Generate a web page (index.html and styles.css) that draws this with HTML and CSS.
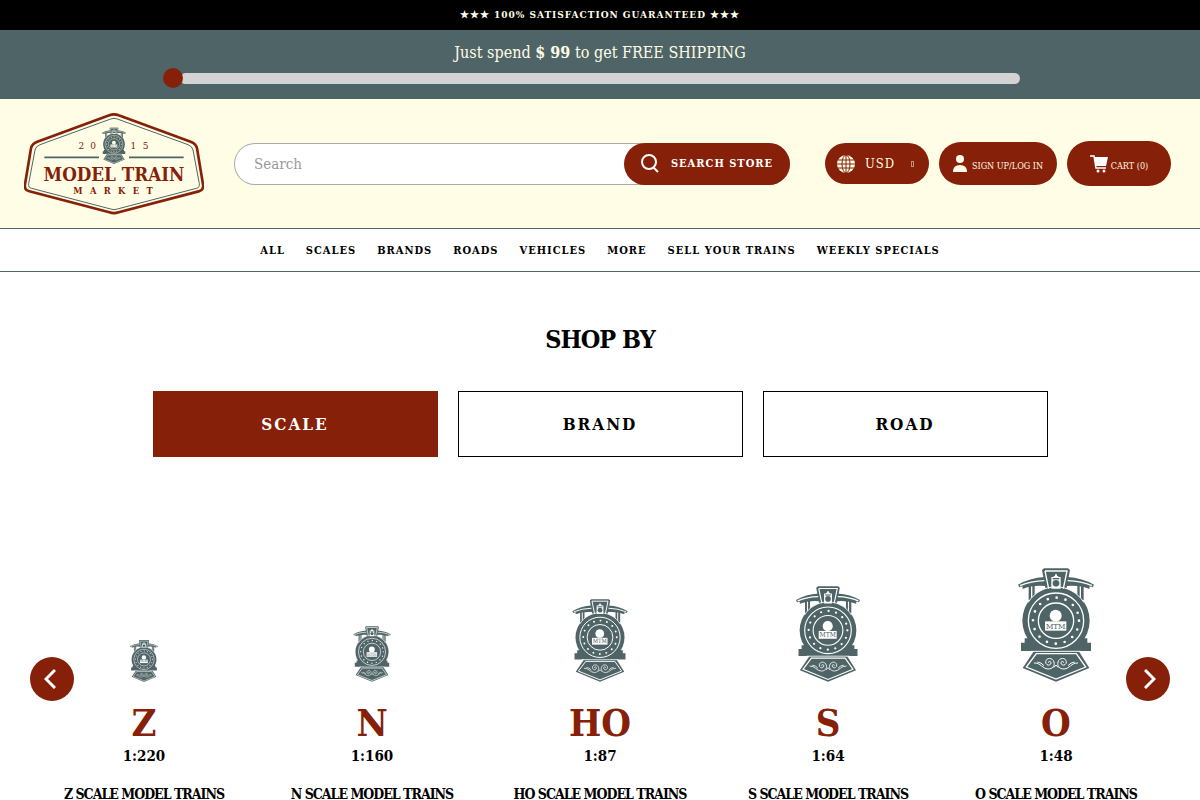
FILE: index.html
```html
<!DOCTYPE html>
<html lang="en">
<head>
    <meta charset="UTF-8">
    <meta name="viewport" content="width=device-width, initial-scale=1.0">
    <title>Model Train Market</title>
    <link rel="stylesheet" href="styles.css">
</head>
<body>

    <!-- shared shapes -->
    <svg class="defs" width="0" height="0" aria-hidden="true">
        <symbol id="train" viewBox="114 54 228 342">
            <g fill="currentColor">
                <path d="M146 98h7v52h-7zM157 98h7v44h-7zM292 98h7v44h-7zM303 98h8v52h-8z"/>
                <path d="M114 104Q148 84 194 81L198 108Q158 104 128 117L127 109L118 112ZM342 104Q308 84 262 81L258 108Q298 104 328 117L329 109L338 112Z"/>
                <path d="M186 60L192 55H264L270 60L258 124H198Z"/>
                <path d="M123 278H134V265H322V278H333V303H123Z"/>
                <circle cx="228" cy="212" r="101"/>
                <path d="M162 303H296L328 354L228 395L128 354Z"/>
            </g>
            <g fill="none" stroke="var(--line)" stroke-width="4">
                <path d="M120 107Q152 93 193 92M336 107Q304 93 263 92"/>
                <path d="M195 63H261L250 116M195 63L206 116"/>
                <path d="M144 158A98 98 0 0 1 312 158" stroke-width="3"/>
                <circle cx="228" cy="212" r="83"/>
                <circle cx="228" cy="212" r="53"/>
                <circle class="rivets" cx="228" cy="212" r="69" stroke-width="8" stroke-linecap="round" stroke-dasharray="0 27.096"/>
                <path d="M152 304H304" stroke-width="3"/>
                <path d="M169 311H289L317 351L228 387L139 351Z"/>
                <path d="M162 339C182 338 187 356 204 357C218 357 225 347 222 336C218 322 199 322 197 335C196 347 212 349 213 339C213 332 205 333 205 338M294 339C274 338 269 356 252 357C238 357 231 347 234 336C238 322 257 322 259 335C260 347 244 349 243 339C243 332 251 333 251 338" stroke-width="3"/>
                <path d="M172 336Q184 337 192 347M284 336Q272 337 264 347M221 353L228 345L235 353" stroke-width="3"/>
            </g>
            <g fill="var(--line)">
                <path d="M214 81H221V78H225V73H231V78H235V81H242V116H214Z"/>
                <circle cx="227" cy="197" r="18"/>
                <path d="M195 214H259V242H195Z"/>
            </g>
            <g fill="currentColor">
                <path d="M218 84H238V88H218Z"/>
                <circle cx="228" cy="100" r="10"/>
                <text class="plate" x="227" y="236" text-anchor="middle">MTM</text>
            </g>
        </symbol>
    </svg>

    <div class="topbar">★★★ 100% SATISFACTION GUARANTEED ★★★</div>

    <div class="shipping">
        <p>Just spend <b>$ 99</b> to get FREE SHIPPING</p>
        <div class="track" role="progressbar" aria-label="Free shipping" aria-valuenow="0" aria-valuemin="0" aria-valuemax="99">
            <span class="knob"></span>
        </div>
    </div>

    <header class="header">
        <a class="logo" href="#" aria-label="Model Train Market">
            <svg width="180" height="102" viewBox="72 38 540 306">
                <path d="M328 45Q342 39 356 45L572 124Q588 130 591 144L609 252Q612 269 596 273L356 336Q342 341 328 336L88 273Q72 269 75 252L93 144Q96 130 112 124Z" fill="none" stroke="#862008" stroke-width="8"/>
                <path d="M332 56Q342 52 352 56L564 133Q577 138 579 149L598 250Q600 262 589 264L352 326Q342 330 332 326L95 264Q84 262 86 250L105 149Q107 138 120 133Z" fill="none" stroke="#4f6466" stroke-width="3"/>
                <path d="M133 171H297M387 171H551" stroke="#4f6466" stroke-width="5"/>
                <use href="#train" x="305" y="81" width="74" height="110"/>
                <g fill="#862008" text-anchor="middle">
                    <text class="year" x="244" y="145">2</text>
                    <text class="year" x="279" y="145">0</text>
                    <text class="year" x="400" y="145">1</text>
                    <text class="year" x="437" y="145">5</text>
                    <text class="name" x="342" y="241">MODEL TRAIN</text>
                    <text class="market" x="350" y="280">MARKET</text>
                </g>
            </svg>
        </a>

        <form class="search">
            <input type="text" placeholder="Search" aria-label="Search">
            <button type="button">
                <svg width="18" height="20" viewBox="0 0 18 20" fill="none" stroke="#fff" stroke-width="2"><circle cx="8" cy="8" r="7"/><path d="M12 13L17 18"/></svg>
                SEARCH STORE
            </button>
        </form>

        <div class="actions">
            <label class="pill currency">
                <svg width="18" height="18" viewBox="0 0 18 18"><circle cx="9" cy="9" r="9" fill="#fffde6"/><g fill="none" stroke="#862008"><ellipse cx="9" cy="9" rx="4" ry="9"/><path d="M9 0V18M0 9H18M1 5H17M1 13H17"/></g></svg>
                <select aria-label="Currency">
                    <option>USD</option>
                </select>
                <span class="caret"></span>
            </label>
            <a class="pill account" href="#">
                <svg width="14" height="17" viewBox="0 0 14 17" fill="#fffde6"><circle cx="7" cy="4" r="4"/><path d="M0 17Q0 10 7 10T14 17Z"/></svg>
                <span>SIGN UP/LOG IN</span>
            </a>
            <a class="pill cart" href="#">
                <svg width="18" height="18" viewBox="0 0 18 18"><path d="M0 1H4L6 13H16" fill="none" stroke="#fff" stroke-width="1.5"/><path d="M4 2H18L16 11H6Z" fill="#fff"/><circle cx="8" cy="16" r="1.5" fill="#fff"/><circle cx="14" cy="16" r="1.5" fill="#fff"/></svg>
                <span>CART (0)</span>
            </a>
        </div>
    </header>

    <nav class="nav">
        <a href="#">ALL</a>
        <a href="#">SCALES</a>
        <a href="#">BRANDS</a>
        <a href="#">ROADS</a>
        <a href="#">VEHICLES</a>
        <a href="#">MORE</a>
        <a href="#">SELL YOUR TRAINS</a>
        <a href="#">WEEKLY SPECIALS</a>
    </nav>

    <main>
        <h1>SHOP BY</h1>

        <div class="tabs">
            <button type="button" class="active">SCALE</button>
            <button type="button">BRAND</button>
            <button type="button">ROAD</button>
        </div>

        <div class="carousel">
            <button type="button" class="arrow prev" aria-label="Previous">
                <svg width="12" height="20" viewBox="0 0 12 20" fill="none" stroke="#fff" stroke-width="3"><path d="M11 1L2 10L11 19"/></svg>
            </button>
            <div class="items">
                <a class="item" href="#">
                    <svg class="train" width="28" height="42"><use href="#train"/></svg>
                    <strong>Z</strong>
                    <b>1:220</b>
                    <span>Z SCALE MODEL TRAINS</span>
                </a>
                <a class="item" href="#">
                    <svg class="train" width="38" height="56"><use href="#train"/></svg>
                    <strong>N</strong>
                    <b>1:160</b>
                    <span>N SCALE MODEL TRAINS</span>
                </a>
                <a class="item" href="#">
                    <svg class="train" width="56" height="83"><use href="#train"/></svg>
                    <strong>HO</strong>
                    <b>1:87</b>
                    <span>HO SCALE MODEL TRAINS</span>
                </a>
                <a class="item" href="#">
                    <svg class="train" width="64" height="96"><use href="#train"/></svg>
                    <strong>S</strong>
                    <b>1:64</b>
                    <span>S SCALE MODEL TRAINS</span>
                </a>
                <a class="item" href="#">
                    <svg class="train" width="76" height="114"><use href="#train"/></svg>
                    <strong>O</strong>
                    <b>1:48</b>
                    <span>O SCALE MODEL TRAINS</span>
                </a>
            </div>
            <button type="button" class="arrow next" aria-label="Next">
                <svg width="12" height="20" viewBox="0 0 12 20" fill="none" stroke="#fff" stroke-width="3"><path d="M1 1L10 10L1 19"/></svg>
            </button>
        </div>
    </main>

</body>
</html>
```
FILE: styles.css
```css
*{
    box-sizing: border-box;
}

body{
    margin: 0;
    background: #fff;
    color: #000;
    font-family: "Roboto Slab", "DejaVu Serif Condensed", "DejaVu Serif", serif;
    --line: #fff;
}

button,input,select{
    font-family: inherit;
    margin: 0;
}

a{
    color: inherit;
    text-decoration: none;
}

.defs{
    display: none;
}

/* top bars */
.topbar{
    height: 30px;
    line-height: 30px;
    background: #000;
    color: #fffde6;
    text-align: center;
    font-size: 10px;
    font-weight: bold;
    letter-spacing: 1px;
}

.shipping{
    padding: 11px 0 15px;
    background: #4f6466;
    color: #fffde6;
}

.shipping p{
    margin: 0 0 8px;
    text-align: center;
    font-size: 16px;
    line-height: 24px;
}

.track{
    position: relative;
    width: 70%;
    height: 11px;
    margin: 0 auto;
    border-radius: 6px;
    background: #d3d3d3;
}

.knob{
    position: absolute;
    left: -17px;
    top: -5px;
    width: 20px;
    height: 20px;
    border-radius: 50%;
    background: #862008;
}

/* header */
.header{
    display: flex;
    align-items: center;
    height: 129px;
    padding: 0 29px 0 24px;
    background: #fffde6;
    --line: #fffde6;
}

.logo{
    display: flex;
    margin-right: 30px;
    color: #4f6466;
}

.plate{
    font-size: 24px;
}

.year{
    font-size: 30px;
}

.name{
    font-size: 56px;
    font-weight: bold;
}

.market{
    font-size: 28px;
    font-weight: bold;
    letter-spacing: 22px;
}

.search{
    flex: 1;
    display: flex;
    height: 42px;
    margin-right: 35px;
    border-radius: 21px;
    background: #fff;
    box-shadow: inset 0 0 0 1px #aaa;
}

.search input{
    flex: 1;
    min-width: 0;
    padding: 0 20px;
    border: 0;
    background: none;
    font-size: 15px;
    outline: none;
}

.search input::placeholder{
    color: #999;
}

.search button{
    display: flex;
    align-items: center;
    justify-content: center;
    gap: 12px;
    width: 166px;
    padding: 0;
    border: 0;
    border-radius: 21px;
    background: #862008;
    color: #fff;
    font-size: 11px;
    font-weight: bold;
    letter-spacing: 1px;
    white-space: nowrap;
}

.actions{
    display: flex;
    align-items: center;
    gap: 10px;
}

.pill{
    display: flex;
    align-items: center;
    justify-content: center;
    gap: 5px;
    height: 43px;
    border-radius: 23px;
    background: #862008;
    color: #fffde6;
    font-size: 9px;
    white-space: nowrap;
}

.currency{
    justify-content: flex-start;
    gap: 10px;
    width: 104px;
    height: 41px;
    padding: 0 15px 0 12px;
}

.currency select{
    flex: 1;
    min-width: 0;
    padding: 0;
    border: 0;
    background: none;
    color: inherit;
    font-size: 13px;
    letter-spacing: 1px;
    appearance: none;
}

.caret{
    width: 3px;
    height: 6px;
    border: 1px solid #c39082;
}

.account{
    width: 118px;
}

.account span,.cart span{
    padding-top: 4px;
}

.cart{
    width: 104px;
    height: 45px;
    gap: 3px;
}

/* menu */
.nav{
    display: flex;
    justify-content: center;
    gap: 21px;
    height: 44px;
    line-height: 44px;
    border-top: 1px solid #4f6466;
    border-bottom: 1px solid #4f6466;
    font-size: 11px;
    font-weight: bold;
    letter-spacing: 1px;
    white-space: nowrap;
}

h1{
    margin: 50px 0 33px;
    text-align: center;
    font-size: 25px;
    line-height: 36px;
    font-weight: bold;
    letter-spacing: -1px;
}

/* tabs */
.tabs{
    display: grid;
    grid-template-columns: repeat(3, 1fr);
    gap: 20px;
    max-width: 895px;
    margin: 0 auto;
}

.tabs button{
    height: 66px;
    border: 1px solid #000;
    background: #fff;
    color: #000;
    font-size: 17px;
    font-weight: bold;
    letter-spacing: 2px;
}

.tabs .active{
    border-color: #862008;
    background: #862008;
    color: #fff;
}

/* carousel */
.carousel{
    position: relative;
    margin-top: 87px;
    padding: 0 30px;
}

.items{
    display: grid;
    grid-template-columns: repeat(5, 1fr);
}

.item{
    display: flex;
    flex-direction: column;
    align-items: center;
    justify-content: flex-end;
    height: 260px;
    white-space: nowrap;
}

.train{
    color: #4f6466;
}

.item strong{
    margin-top: 19px;
    color: #862008;
    font-size: 38px;
    line-height: 44px;
}

.item b{
    font-size: 15px;
    line-height: 22px;
}

.item span{
    margin-top: 17px;
    font-size: 14px;
    font-weight: bold;
    line-height: 20px;
    letter-spacing: -1px;
}

.arrow{
    position: absolute;
    top: 113px;
    display: flex;
    align-items: center;
    justify-content: center;
    width: 44px;
    height: 44px;
    padding: 0;
    border: 0;
    border-radius: 50%;
    background: #862008;
}

.prev{
    left: 30px;
    padding-right: 4px;
}

.next{
    right: 30px;
    padding-left: 4px;
}
```
